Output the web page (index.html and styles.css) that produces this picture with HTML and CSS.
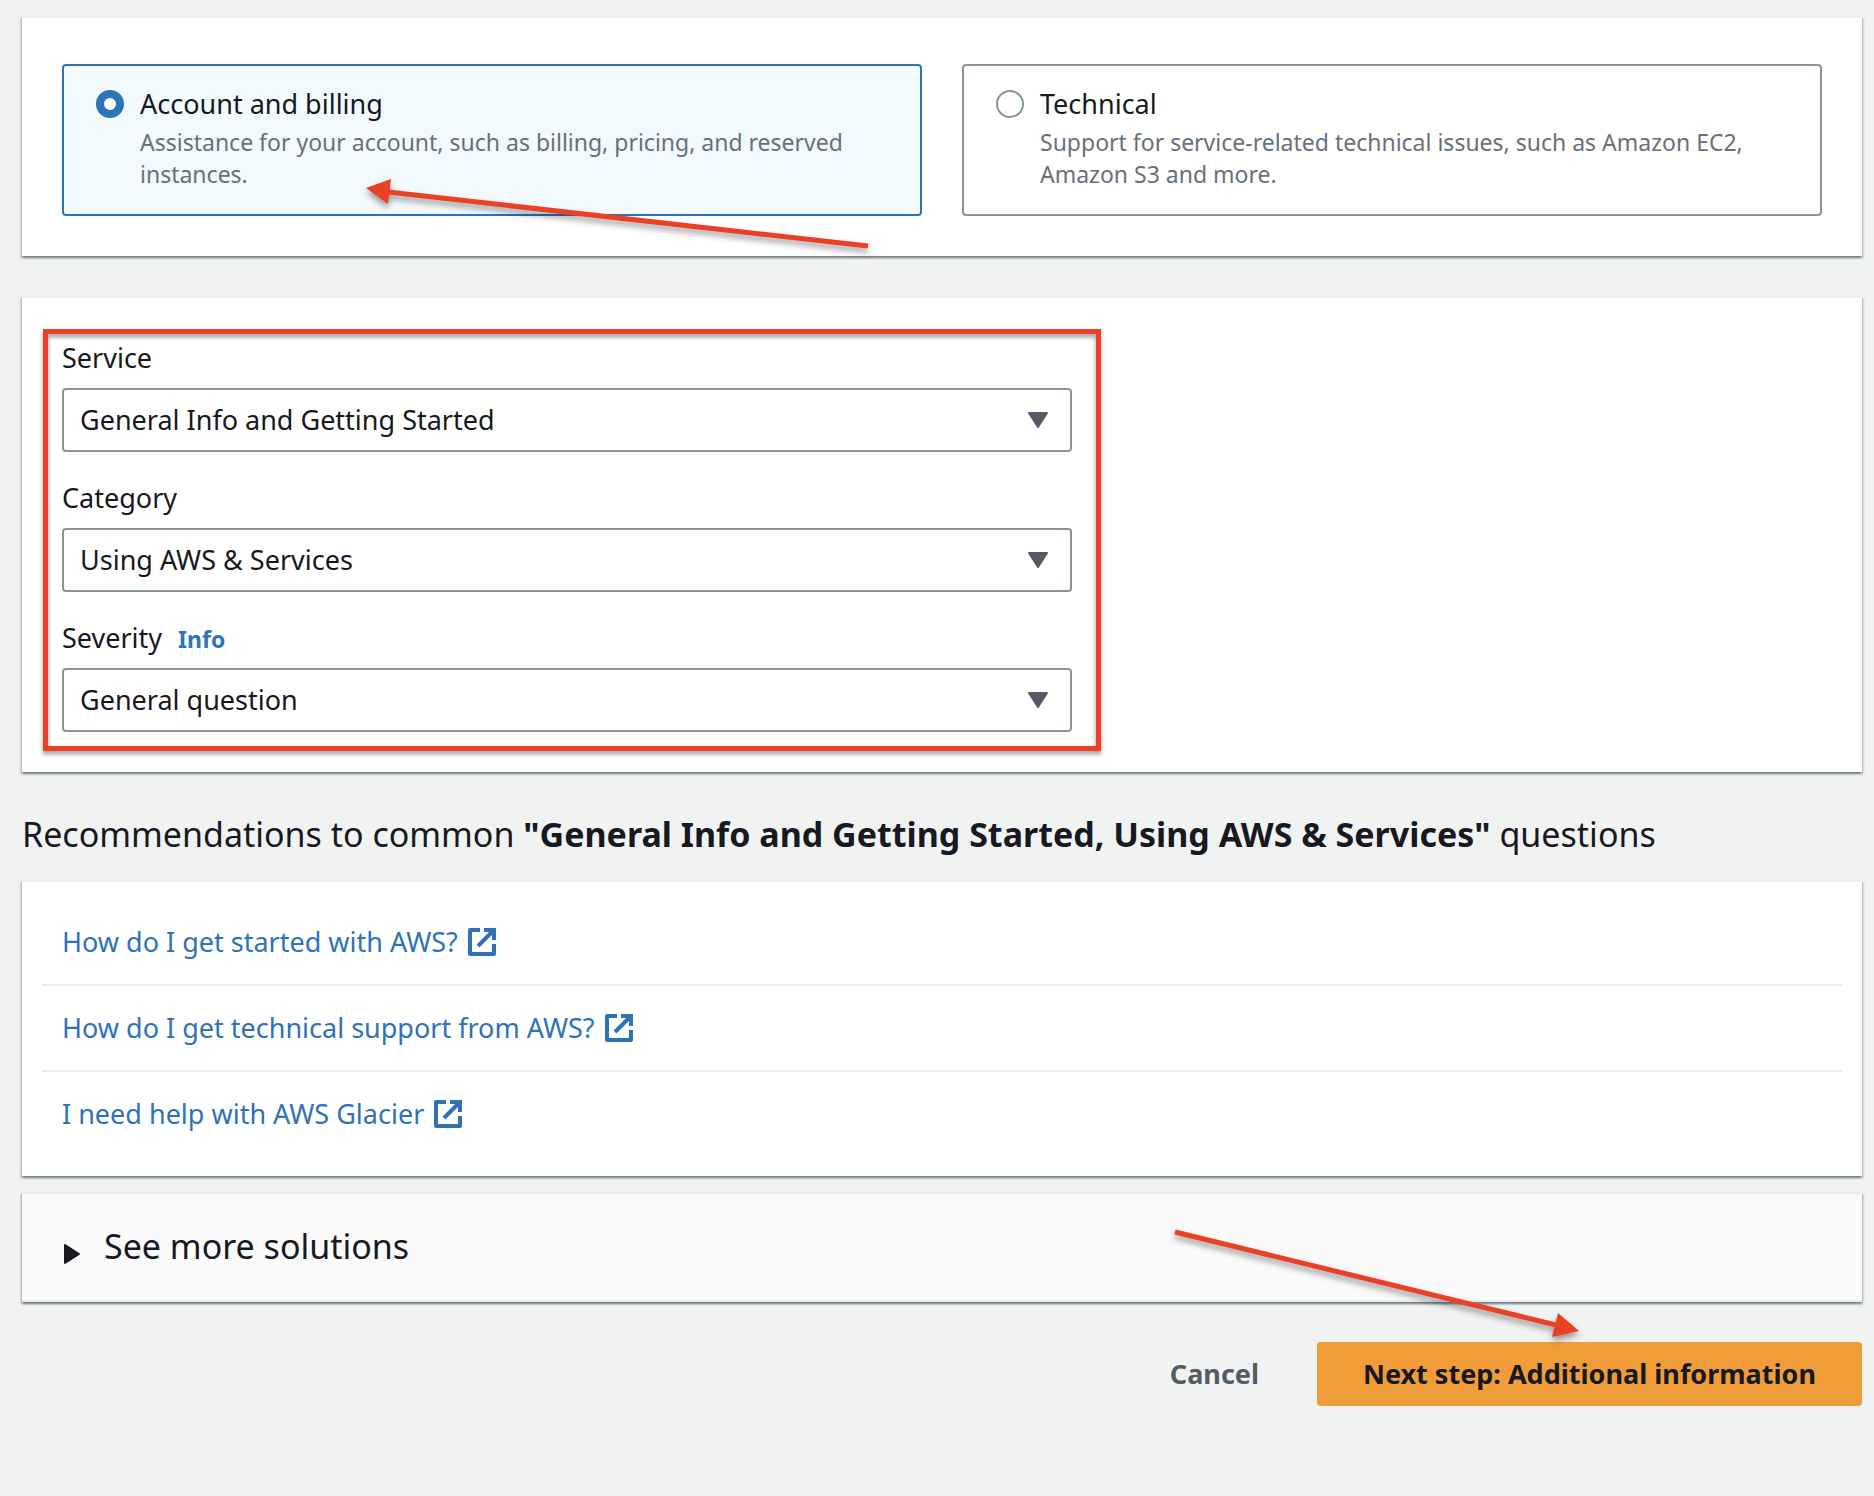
FILE: index.html
```
<!DOCTYPE html>
<html lang="en">
<head>
<meta charset="utf-8">
<meta name="viewport" content="width=device-width, initial-scale=1">
<title>Create case</title>
<link rel="stylesheet" href="styles.css">
</head>
<body>
<svg class="sprite" aria-hidden="true">
  <symbol id="external" viewBox="0 0 28 28">
    <path d="M12 2H2V26H26V16" fill="none" stroke="currentColor" stroke-width="4" stroke-linejoin="round"/>
    <path d="M10 18L24 4" fill="none" stroke="currentColor" stroke-width="4"/>
    <path d="M16 0H28V12H24V4H16Z" fill="currentColor"/>
  </symbol>
  <symbol id="caret" viewBox="0 0 20 16">
    <path d="M1 1H19L10 15Z" fill="currentColor" stroke="currentColor" stroke-width="2" stroke-linejoin="round"/>
  </symbol>
</svg>
<main class="page">
  <section class="panel case-type">
    <label class="tile tile-selected">
      <input class="radio" type="radio" name="case-type" checked>
      <span class="tile-text">
        <span class="tile-title">Account and billing</span>
        <span class="tile-desc">Assistance for your account, such as billing, pricing, and reserved instances.</span>
      </span>
    </label>
    <label class="tile">
      <input class="radio" type="radio" name="case-type">
      <span class="tile-text">
        <span class="tile-title">Technical</span>
        <span class="tile-desc">Support for service-related technical issues, such as Amazon EC2, Amazon S3 and more.</span>
      </span>
    </label>
    <svg class="arrow arrow-type" viewBox="0 0 516 80" aria-hidden="true">
      <path d="M28 20L508 74" stroke="#ea4025" stroke-width="5"/>
      <path d="M6 16L31 7L28 32Z" fill="#ea4025"/>
    </svg>
  </section>

  <section class="panel details">
    <div class="fields">
      <div class="field">
        <div class="field-head"><label for="service">Service</label></div>
        <div class="select-box">
          <select id="service"><option>General Info and Getting Started</option></select>
          <svg class="caret" aria-hidden="true"><use href="#caret"/></svg>
        </div>
      </div>
      <div class="field">
        <div class="field-head"><label for="category">Category</label></div>
        <div class="select-box">
          <select id="category"><option>Using AWS &amp; Services</option></select>
          <svg class="caret" aria-hidden="true"><use href="#caret"/></svg>
        </div>
      </div>
      <div class="field">
        <div class="field-head"><label for="severity">Severity</label><a class="info" href="#">Info</a></div>
        <div class="select-box">
          <select id="severity"><option>General question</option></select>
          <svg class="caret" aria-hidden="true"><use href="#caret"/></svg>
        </div>
      </div>
      <div class="highlight"></div>
    </div>
  </section>

  <h2 class="heading">Recommendations to common <b>"General Info and Getting Started, Using AWS &amp; Services"</b> questions</h2>

  <section class="panel recommendations">
    <ul class="links">
      <li><a href="#">How do I get started with AWS? <svg class="external" aria-hidden="true"><use href="#external"/></svg></a></li>
      <li><a href="#">How do I get technical support from AWS? <svg class="external" aria-hidden="true"><use href="#external"/></svg></a></li>
      <li><a href="#">I need help with AWS Glacier <svg class="external" aria-hidden="true"><use href="#external"/></svg></a></li>
    </ul>
  </section>

  <section class="panel more">
    <button class="expander" type="button">
      <svg class="expander-icon" viewBox="0 0 16 20" aria-hidden="true"><path d="M1 1V19L15 10Z" fill="currentColor" stroke="currentColor" stroke-width="2" stroke-linejoin="round"/></svg>
      See more solutions
    </button>
  </section>

  <footer class="actions">
    <button class="button cancel" type="button">Cancel</button>
    <button class="button next" type="submit">Next step: Additional information</button>
    <svg class="arrow arrow-next" viewBox="0 0 416 120" aria-hidden="true">
      <path d="M5 8L390 102" stroke="#ea4025" stroke-width="5"/>
      <path d="M409 107L388 89L382 113Z" fill="#ea4025"/>
    </svg>
  </footer>
</main>
</body>
</html>
```
FILE: styles.css
```
* {
  box-sizing: border-box;
}

body {
  margin: 0;
  background: #f1f3f3;
  color: #16191f;
  font: 27px/40px "Noto Sans", "Open Sans", sans-serif;
}

button,
select {
  font: inherit;
  color: inherit;
}

a {
  color: #2e72b8;
  text-decoration: none;
}

.sprite {
  position: absolute;
  width: 0;
  height: 0;
}

.page {
  padding: 16px 12px 40px 22px;
}

.panel {
  background: #fff;
  border-top: 2px solid #eaeded;
  box-shadow: 0 2px 2px rgba(0, 28, 36, 0.4), 2px 2px 2px rgba(0, 28, 36, 0.12), -2px 2px 2px rgba(0, 28, 36, 0.12);
}

.case-type {
  position: relative;
  display: grid;
  grid-template-columns: 1fr 1fr;
  gap: 40px;
  padding: 46px 40px 40px;
}

.tile {
  display: flex;
  gap: 16px;
  padding: 18px 32px 24px;
  border: 2px solid #879596;
  border-radius: 4px;
}

.tile-selected {
  border-color: #2e72b8;
  background: #f2fafd;
}

.radio {
  appearance: none;
  flex: none;
  width: 28px;
  height: 28px;
  margin: 6px 0 0;
  border: 2px solid #879596;
  border-radius: 50%;
  background: #fff;
}

.radio:checked {
  border: 8px solid #2e72b8;
}

.tile-title,
.tile-desc {
  display: block;
}

.tile-desc {
  margin-top: 2px;
  color: #687078;
  font-size: 23px;
  line-height: 32px;
}

.arrow {
  position: absolute;
  filter: drop-shadow(0 4px 3px rgba(0, 0, 0, 0.4));
}

.arrow-type {
  left: 338px;
  top: 154px;
  width: 516px;
  height: 80px;
}

.details {
  margin-top: 40px;
  padding: 40px;
}

.fields {
  position: relative;
  display: flex;
  flex-direction: column;
  gap: 26px;
  max-width: 1010px;
}

.highlight {
  position: absolute;
  inset: -9px -29px -19px -19px;
  border: 5px solid #ea4025;
  filter: drop-shadow(0 3px 2px rgba(0, 0, 0, 0.4));
  pointer-events: none;
}

.field-head {
  display: flex;
  align-items: baseline;
  gap: 16px;
  height: 50px;
}

.info {
  font-size: 23px;
  font-weight: 700;
}

.select-box {
  position: relative;
}

select {
  display: block;
  appearance: none;
  width: 100%;
  height: 64px;
  padding: 0 60px 0 16px;
  border: 2px solid #879596;
  border-radius: 4px;
  background: #fff;
}

.caret {
  position: absolute;
  top: 24px;
  right: 24px;
  width: 20px;
  height: 16px;
  color: #545b64;
  pointer-events: none;
}

.heading {
  margin: 36px 0 20px;
  font-size: 34px;
  font-weight: 400;
  line-height: 52px;
}

.recommendations {
  padding: 18px 20px 20px;
}

.links {
  margin: 0;
  padding: 0;
  list-style: none;
}

.links li {
  padding: 22px 20px;
}

.links li + li {
  border-top: 2px solid #eaeded;
}

.links a {
  display: flex;
  align-items: center;
  gap: 10px;
}

.external {
  width: 28px;
  height: 28px;
}

.more {
  margin-top: 16px;
  border-bottom: 2px solid #eaeded;
  background: #fafafa;
}

.expander {
  display: flex;
  align-items: center;
  gap: 24px;
  width: 100%;
  padding: 26px 42px 28px;
  border: 0;
  background: none;
  font-size: 34px;
  line-height: 52px;
}

.expander-icon {
  width: 16px;
  height: 20px;
  margin-top: 16px;
}

.actions {
  position: relative;
  display: flex;
  justify-content: flex-end;
  gap: 12px;
  margin-top: 40px;
}

.button {
  height: 64px;
  padding: 0 46px;
  border: 0;
  border-radius: 4px;
  background: none;
  font-weight: 700;
}

.cancel {
  color: #545b64;
}

.next {
  background: #f09d39;
}

.arrow-next {
  top: -118px;
  right: 276px;
  width: 416px;
  height: 120px;
}
```
